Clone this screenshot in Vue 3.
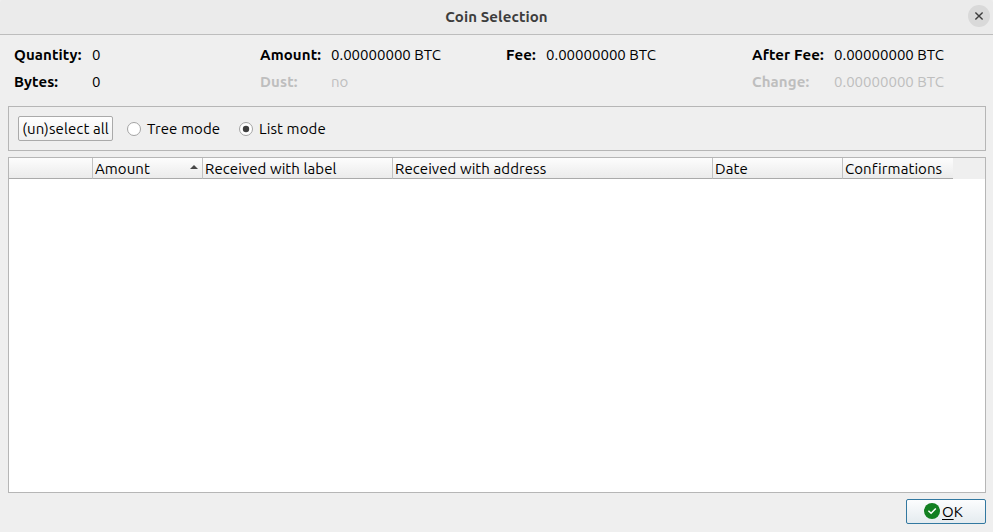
<script setup>
import { ref } from 'vue'

const groups = [
  { id: 'quantity', rows: [{ label: 'Quantity:', value: '0' }, { label: 'Bytes:', value: '0' }] },
  { id: 'amount', rows: [{ label: 'Amount:', value: '0.00000000 BTC' }, { label: 'Dust:', value: 'no', disabled: true }] },
  { id: 'fee', rows: [{ label: 'Fee:', value: '0.00000000 BTC' }] },
  { id: 'after', rows: [{ label: 'After Fee:', value: '0.00000000 BTC' }, { label: 'Change:', value: '0.00000000 BTC', disabled: true }] }
]
const columns = [
  { id: 'check', title: '' },
  { id: 'amount', title: 'Amount', sorted: true },
  { id: 'label', title: 'Received with label' },
  { id: 'address', title: 'Received with address' },
  { id: 'date', title: 'Date' },
  { id: 'conf', title: 'Confirmations' }
]
const modes = [{ id: 'tree', title: 'Tree mode' }, { id: 'list', title: 'List mode' }]
const mode = ref('list')
</script>

<template>
  <div class="dialog">
    <header class="titlebar">
      <span></span>
      <h1>Coin Selection</h1>
      <button class="close" aria-label="Close">
        <svg viewBox="0 0 22 22" width="22" height="22">
          <path d="M7.4 7.4l7.2 7.2M14.6 7.4l-7.2 7.2" fill="none" stroke="#3d3d3d" stroke-width="1.4" />
        </svg>
      </button>
    </header>

    <section class="summary">
      <dl v-for="g in groups" :key="g.id" :class="['group', 'g-' + g.id]">
        <template v-for="r in g.rows" :key="r.label">
          <dt :class="{ disabled: r.disabled }">{{ r.label }}</dt>
          <dd :class="{ disabled: r.disabled }">{{ r.value }}</dd>
        </template>
      </dl>
    </section>

    <section class="toolbar">
      <button class="select-all"><span>(un)select all</span></button>
      <label v-for="m in modes" :key="m.id" :class="['radio', 'r-' + m.id]" @click="mode = m.id">
        <svg viewBox="0 0 14 14" width="14" height="14">
          <circle cx="7" cy="7" r="6.5" fill="#fff" stroke="#a3a3a3" />
          <circle v-if="mode === m.id" cx="7" cy="7" r="3.2" fill="#3f3f3f" />
        </svg>
        <span>{{ m.title }}</span>
      </label>
    </section>

    <section class="table">
      <div class="head">
        <div v-for="c in columns" :key="c.id" :class="['cell', 'c-' + c.id]">
          <span>{{ c.title }}</span>
          <svg v-if="c.sorted" viewBox="0 0 8 4" width="8" height="4"><path d="M0 4L4 0L8 4Z" fill="#484848" /></svg>
        </div>
      </div>
    </section>

    <footer class="actions">
      <button class="ok">
        <svg viewBox="0 0 16 16" width="16" height="16">
          <circle cx="8" cy="8" r="8" fill="#128022" />
          <path d="M4.4 7.7L7.1 10.2L11.8 5.5" fill="none" stroke="#fff" stroke-width="1.5" />
        </svg>
        <span><u>O</u>K</span>
      </button>
    </footer>
  </div>
</template>

<style>
body { margin: 0; background: #efefef; }
</style>

<style scoped>
.dialog {
  box-sizing: border-box;
  width: 993px;
  height: 532px;
  display: flex;
  flex-direction: column;
  background: #efefef;
  color: #000;
  font: 15px/20px Ubuntu, "Noto Sans", sans-serif;
  white-space: nowrap;
  overflow: hidden;
}
button { font: inherit; color: inherit; padding: 0; margin: 0; box-sizing: border-box; }
svg { display: block; flex: none; }
.titlebar {
  box-sizing: border-box;
  height: 35px;
  flex: none;
  display: grid;
  grid-template-columns: 1fr auto 1fr;
  align-items: center;
  padding: 0 3px 2px;
  background: #ebebeb;
  border-bottom: 1px solid #bdbdbd;
  border-radius: 3px 3px 0 0;
}
h1 { margin: 0; padding-top: 1px; font-size: 15px; line-height: 20px; font-weight: 700; letter-spacing: 0.09px; color: #3d3d3d; }
.close { justify-self: end; width: 22px; height: 22px; border: 0; border-radius: 50%; background: #d9d9d9; }
.summary { display: grid; grid-template-columns: repeat(4, 246px); height: 71px; flex: none; padding: 10px 0 0 14px; box-sizing: border-box; }
.group { margin: 0; display: grid; grid-auto-rows: 20px; row-gap: 7px; align-content: start; }
.g-quantity { grid-template-columns: 78px auto; }
.g-amount { grid-template-columns: 71px auto; }
.g-fee { grid-template-columns: 40px auto; }
.g-after { grid-template-columns: 82px auto; }
dt { font-weight: 700; letter-spacing: 0.12px; }
dd { margin: 0; }
.disabled { color: #bebebe; }
.toolbar {
  box-sizing: border-box;
  height: 45px;
  flex: none;
  margin: 0 7px 0 8px;
  padding: 0 9px;
  display: flex;
  align-items: center;
  border: 1px solid #b6b6b6;
  letter-spacing: 0.1px;
}
.select-all {
  width: 95px;
  height: 25px;
  display: flex;
  align-items: center;
  justify-content: center;
  border: 1px solid #aaa;
  border-radius: 2px;
  background: linear-gradient(#fefefe, #f0f0f0);
  letter-spacing: 0.1px;
}
.radio { display: flex; align-items: center; gap: 6px; }
.r-tree { width: 112px; margin-left: 14px; }
.table {
  box-sizing: border-box;
  height: 336px;
  flex: none;
  margin: 6px 7px 0 8px;
  border: 1px solid #b6b6b6;
  background: #fff;
}
.head {
  display: grid;
  grid-template-columns: 84px 110px 190px 320px 130px 110px 1fr;
  grid-template-rows: 21px;
  height: 21px;
  background: #efefef;
}
.cell {
  box-sizing: border-box;
  display: flex;
  align-items: center;
  justify-content: space-between;
  padding: 1px 4px 0 2px;
  line-height: 19px;
  letter-spacing: 0.08px;
  border-right: 1px solid #c2c2c2;
  border-bottom: 1px solid #aaa;
  background: linear-gradient(#fdfdfd, #ebebeb);
}
.c-conf { border-right: 0; }
.cell svg { margin-top: -4px; }
.actions { display: flex; justify-content: flex-end; padding: 6px 7px 0; }
.ok {
  width: 80px;
  height: 25px;
  display: flex;
  align-items: center;
  gap: 2px;
  padding-left: 17px;
  border: 1px solid #3278a0;
  border-radius: 2px;
  background: linear-gradient(#fcfdfe, #e4ebef);
}
.ok svg { margin-top: -1px; }
.ok u { text-underline-offset: 2px; text-decoration-thickness: 1px; }
</style>
